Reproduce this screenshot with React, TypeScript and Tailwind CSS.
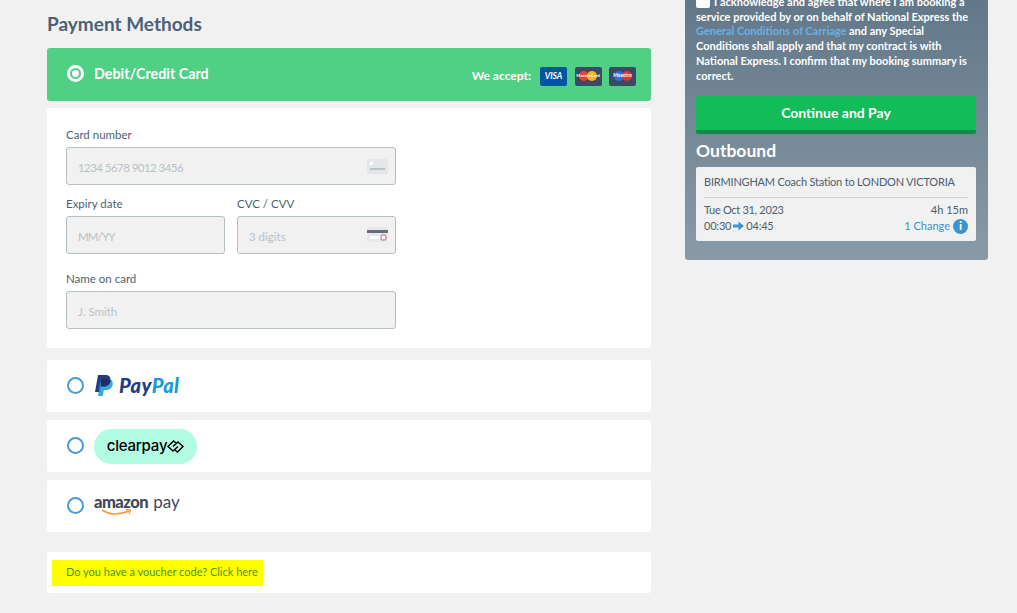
const font = "font-['Lato','Noto_Sans',sans-serif]"

function Radio({ active }: { active?: boolean }) {
  if (active) {
    return (
      <span className="w-[17px] h-[17px] -mt-[2px] rounded-full border-[3px] border-white flex items-center justify-center shrink-0">
        <span className="w-[7px] h-[7px] rounded-full bg-white" />
      </span>
    )
  }
  return <span className="w-[17px] h-[17px] -mt-[2px] rounded-full border-[2.5px] border-[#4a9ad4] bg-white shrink-0" />
}

function CardBadge({ children, bg }: { children: React.ReactNode; bg: string }) {
  return (
    <span className={`w-[27px] h-[19px] rounded-[2px] flex items-center justify-center relative overflow-hidden ${bg}`}>
      {children}
    </span>
  )
}

function Field({ label, placeholder, icon, className, textClass }: { label: string; placeholder: string; icon?: React.ReactNode; className?: string; textClass?: string }) {
  return (
    <div className={className}>
      <div className="h-[14px] text-[11.5px] leading-[15px] text-[#4b5f70]">{label}</div>
      <div className="relative h-[38px] mt-[6px] bg-[#f1f1f1] border border-[#b4c0c6] rounded-[3px] flex items-center pl-[11px] text-[#b9c1c6]">
        <span className={`pt-[3px] text-[11.5px] ${textClass ?? ''}`}>{placeholder}</span>
        {icon}
      </div>
    </div>
  )
}

function PlainCardIcon() {
  return (
    <svg className="absolute right-[7px] top-[11px]" width="21" height="15" viewBox="0 0 21 15">
      <rect width="21" height="15" rx="2" fill="#e3e7ea" />
      <rect x="3" y="3" width="3" height="3" fill="#fff" />
      <rect x="3" y="9" width="15" height="2" fill="#bcc4c8" />
    </svg>
  )
}

function CvcIcon() {
  return (
    <svg className="absolute right-[7px] top-[10px]" width="21" height="15" viewBox="0 0 21 15">
      <rect width="21" height="15" rx="2" fill="#e6e9ec" />
      <rect y="3" width="21" height="3" fill="#656d7d" />
      <rect x="3" y="9" width="15" height="3" fill="#fff" />
      <rect x="14" y="8" width="5" height="5" rx="1.5" fill="#fff" stroke="#e0406f" strokeWidth="1" />
    </svg>
  )
}

function MethodRow({ children }: { children: React.ReactNode }) {
  return (
    <div className="h-[52px] bg-white rounded-[3px] flex items-center pl-[20px] gap-[10px]">
      <Radio />
      {children}
    </div>
  )
}

export default function App() {
  return (
    <div className={`w-[1017px] h-[613px] overflow-hidden bg-[#f1f1f1] flex items-start pl-[47px] ${font}`}>
      {/* Left column: payment methods */}
      <div className="w-[604px] shrink-0 flex flex-col">
        <h2 className="text-[19px] leading-[24px] font-bold text-[#4a6178] mt-[12px] mb-[12px]">Payment Methods</h2>

        <div className="h-[53px] bg-[#4fd084] rounded-[3px] flex items-center pl-[20px] pr-[15px] gap-[10px] text-white">
          <Radio active />
          <span className="text-[14.3px] font-bold -mt-[2px]">Debit/Credit Card</span>
          <span className="ml-auto text-[12px] font-bold -mr-[1px] mt-[3px]">We accept:</span>
          <span className="flex gap-[7.5px] mt-[3px]">
            <CardBadge bg="bg-[#00579f]">
              <span className="text-[8.5px] font-bold italic text-white">VISA</span>
            </CardBadge>
            <CardBadge bg="bg-[#3a4a63]">
              <span className="w-[10px] h-[10px] rounded-full bg-[#e8412c] -mr-[2px]" />
              <span className="w-[10px] h-[10px] rounded-full bg-[#f8b51c]" />
              <span className="absolute text-[4.5px] font-bold text-white">MasterCard</span>
            </CardBadge>
            <CardBadge bg="bg-[#3a4a63]">
              <span className="w-[10px] h-[10px] rounded-full bg-[#2f6fd8] -mr-[2px]" />
              <span className="w-[10px] h-[10px] rounded-full bg-[#d8343c]" />
              <span className="absolute text-[5px] font-bold text-white">Maestro</span>
            </CardBadge>
          </span>
        </div>

        <div className="h-[240px] mt-[7px] bg-white rounded-[3px] pl-[19px] pt-[19px] flex flex-col">
          <Field className="w-[330px]" label="Card number" placeholder="1234 5678 9012 3456" textClass="tracking-[-0.55px]" icon={<PlainCardIcon />} />
          <div className="flex gap-[12px] w-[330px] mt-[11px]">
            <Field className="flex-1" label="Expiry date" placeholder="MM/YY" textClass="tracking-[-0.9px]" />
            <Field className="flex-1" label="CVC / CVV" placeholder="3 digits" icon={<CvcIcon />} />
          </div>
          <Field className="w-[330px] mt-[17px]" label="Name on card" placeholder="J. Smith" />
        </div>

        <div className="mt-[12px] flex flex-col gap-[8px]">
          <MethodRow>
            <span className="flex items-center gap-[6px] -mt-[2px]">
              <svg width="19" height="21" viewBox="0 0 19 21">
                <path d="M4 0h7c4 0 6 2 5.400 5.500C15.700 10 13 11.500 9.500 11.500H7L6 17H1z" fill="#253b80" />
                <path d="M6.500 4h7c4 0 5.800 2 5.200 5.500C18 13.500 15.500 15 12 15H9.800L8.800 21H4z" fill="#179bd7" opacity="0.85" />
                <path d="M6.500 4h8c1 .5 2 1 2.200 2C16 10 13 11.500 9.500 11.500H7z" fill="#222d65" />
              </svg>
              <span className="text-[20px] leading-none font-black italic tracking-[0.4px]">
                <span className="text-[#253b80]">Pay</span>
                <span className="text-[#179bd7]">Pal</span>
              </span>
            </span>
          </MethodRow>
          <MethodRow>
            <span className="w-[103px] h-[35px] rounded-full bg-[#b2fce4] flex items-center justify-center font-['Inter',sans-serif] text-[15px] font-medium tracking-[-0.2px] text-black">
              clearpay
              <svg width="17" height="13" viewBox="0 0 17 13" fill="none" stroke="#000" strokeWidth="1.500">
                <path d="M9 3L6.500 1 1 6.500 6 11l5-4.500" />
                <path d="M8 10l2.500 2L16 6.500 11 2 6 6.500" />
              </svg>
            </span>
          </MethodRow>
          <MethodRow>
            <span className="flex flex-col -mt-[3px]">
              <span className="flex items-baseline gap-[5px] leading-[17px] text-[#3f4955]">
                <span className="text-[16.5px] font-black tracking-[-0.5px]">amazon</span>
                <span className="text-[17px]">pay</span>
              </span>
              <svg className="-mt-[2px] ml-[7px]" width="31" height="7" viewBox="0 0 31 7" fill="none">
                <path d="M1 1c8 5 18 5 27 1" stroke="#f79c34" strokeWidth="1.600" />
                <path d="M25 0.500l4.500 0.500-1.500 4" stroke="#f79c34" strokeWidth="1.400" />
              </svg>
            </span>
          </MethodRow>
        </div>

        <div className="h-[41px] mt-[20px] bg-white rounded-[3px] flex items-center pl-[5px]">
          <span className="w-[211px] h-[26px] bg-[#ffff00] flex items-center pl-[14px] text-[11px] text-[#3f9a1c]">
            Do you have a voucher code? Click here
          </span>
        </div>
      </div>

      {/* Right column: booking summary, scrolled past its top */}
      <div className="w-[303px] ml-[34px] shrink-0 -mt-[40px] h-[300px] rounded-[3px] bg-gradient-to-b from-[#5c7384] to-[#8a9aa6] pl-[11px] pr-[12px] flex flex-col">
        <div className="mt-[35px] text-[11px] leading-[14.700px] font-bold text-white">
          <span className="inline-block w-[14px] h-[14px] bg-white rounded-[2px] align-top -mt-[1px] mr-[4px]" />
          I acknowledge and agree that where I am booking a service provided by or on behalf of National Express the{' '}
          <span className="text-[#6cb0e2]">General Conditions of Carriage</span> and any Special Conditions shall apply and that my contract is with National Express. I confirm that my booking summary is correct.
        </div>
        <button className="mt-[13px] h-[38px] pb-[2px] shrink-0 bg-[#12bd59] border-b-[4px] border-[#138a47] rounded-[2px] text-white text-[14px] font-bold">
          Continue and Pay
        </button>
        <div className="mt-[6px] text-[17.5px] leading-[22px] font-bold text-white">Outbound</div>
        <div className="mt-[5px] h-[74px] bg-[#f1f1f1] rounded-[2px] px-[8px] pt-[8px] text-[11px] text-[#4b5f70]">
          <div className="leading-[14px] pb-[8px] border-b border-[#cfd3d6] tracking-[-0.2px]">BIRMINGHAM Coach Station to LONDON VICTORIA</div>
          <div className="flex justify-between mt-[4px] leading-[16px]">
            <span className="tracking-[-0.3px]">Tue Oct 31, 2023</span>
            <span>4h 15m</span>
          </div>
          <div className="flex justify-between items-center leading-[16px]">
            <span className="flex items-center gap-[2px] tracking-[-0.2px]">
              00:30
              <svg width="11" height="10" viewBox="0 0 11 10">
                <path d="M0 3.500h5.500V.5L11 5l-5.500 4.500v-3H0z" fill="#3a94d4" />
              </svg>
              04:45
            </span>
            <span className="flex items-center gap-[3px] text-[#3a94d4]">
              1 Change
              <span className="w-[15px] h-[15px] rounded-full bg-[#3a94d4] text-white text-[12px] font-black flex items-center justify-center">i</span>
            </span>
          </div>
        </div>
      </div>
    </div>
  )
}
